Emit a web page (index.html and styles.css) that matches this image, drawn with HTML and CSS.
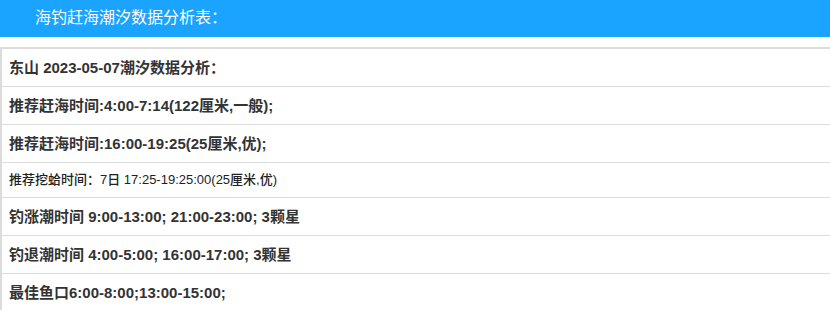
FILE: index.html
```html
<!DOCTYPE html>
<html lang="zh">
<head>
<meta charset="utf-8">
<title>海钓赶海潮汐数据分析表</title>
<link rel="stylesheet" href="styles.css">
</head>
<body>
<div class="header">海钓赶海潮汐数据分析表：</div>
<div class="table">
  <div class="row">东山 2023-05-07潮汐数据分析：</div>
  <div class="row">推荐赶海时间:4:00-7:14(122厘米,一般);</div>
  <div class="row">推荐赶海时间:16:00-19:25(25厘米,优);</div>
  <div class="row small">推荐挖蛤时间：7日 17:25-19:25:00(25厘米,优)</div>
  <div class="row">钓涨潮时间 9:00-13:00; 21:00-23:00; 3颗星</div>
  <div class="row">钓退潮时间 4:00-5:00; 16:00-17:00; 3颗星</div>
  <div class="row">最佳鱼口6:00-8:00;13:00-15:00;</div>
</div>
</body>
</html>
```
FILE: styles.css
```css
html, body {
  margin: 0;
  padding: 0;
  background: #fff;
  font-family: "Liberation Sans", Arial, "Noto Sans CJK SC", sans-serif;
}
.header {
  height: 37px;
  line-height: 35px;
  background: #1aa3ff;
  color: #fff;
  font-size: 16px;
  padding-left: 35px;
}
.table {
  margin-top: 10px;
  border-top: 2px solid #dcdcdc;
  border-left: 2px solid #dcdcdc;
}
.row {
  padding: 10px 7px;
  line-height: 17px;
  font-size: 15px;
  font-weight: bold;
  color: #333;
  border-bottom: 1px solid #dcdcdc;
}
.row.small {
  font-size: 13px;
  line-height: 14px;
  font-weight: 500;
  color: #222;
}
```
